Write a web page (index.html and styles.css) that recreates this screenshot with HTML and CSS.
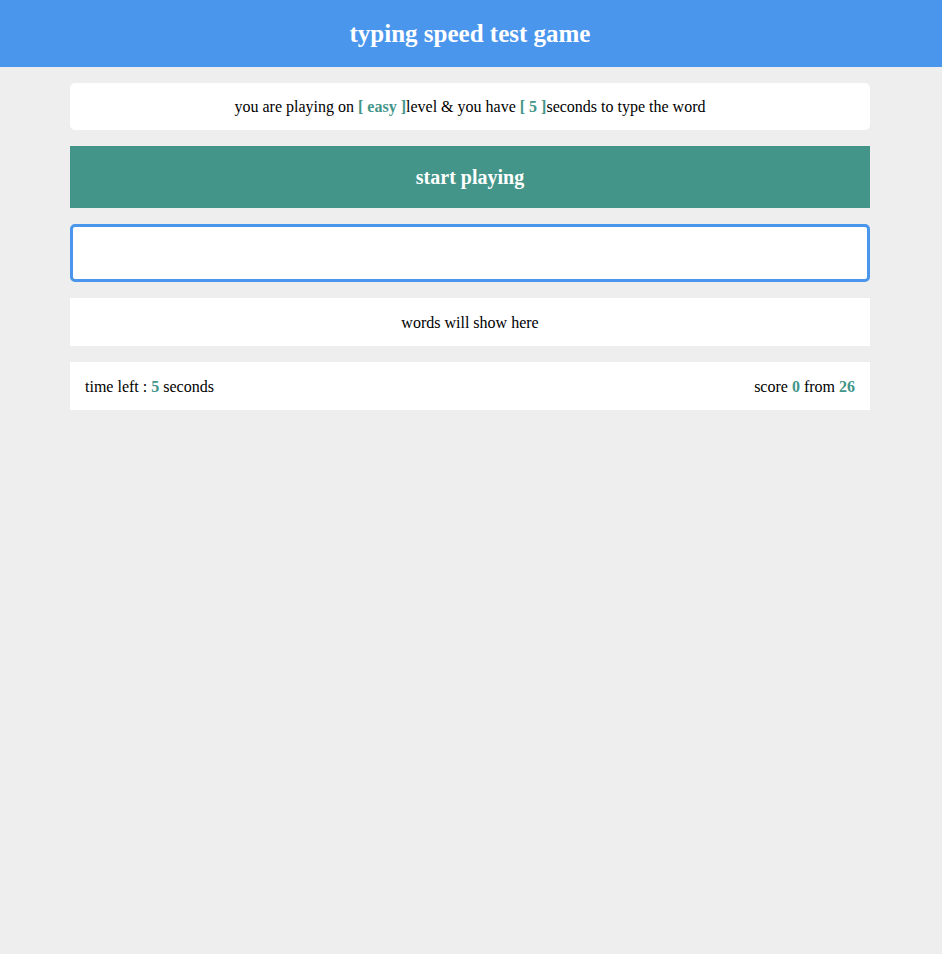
FILE: index.html
```html
<!DOCTYPE html>
<html>
<head>
<meta charset="utf-8">
<link rel="stylesheet" href="styles.css">
</head>
<body>
<header class="header">typing speed test game</header>
<main class="game">
  <div class="message">you are playing on <span class="hl">[ easy ]</span>level &amp; you have <span class="hl">[ 5 ]</span>seconds to type the word</div>
  <div class="start">start playing</div>
  <input class="input" type="text">
  <div class="words">words will show here</div>
  <div class="control">
    <div>time left : <span class="hl">5</span> seconds</div>
    <div>score <span class="hl">0</span> from <span class="hl">26</span></div>
  </div>
</main>
</body>
</html>
```
FILE: styles.css
```css
* { box-sizing: border-box; }
body {
  margin: 0;
  background: #eeeeee;
  font-family: "Liberation Serif", "Times New Roman", serif;
  font-size: 16px;
  color: #000;
  min-height: 954px;
}
.header {
  background: #4a96ed;
  color: #fff;
  font-weight: bold;
  font-size: 25px;
  text-align: center;
  height: 67px;
  line-height: 67px;
  padding-right: 2px;
}
.game {
  width: 800px;
  margin: 16px calc(50% - 401px) 0 calc(50% - 401px);
  display: flex;
  flex-direction: column;
  gap: 16px;
}
.message {
  background: #fff;
  border-radius: 5px;
  text-align: center;
  padding: 15px 15px 14px;
  height: 47px;
}
.hl {
  color: #43958a;
  font-weight: bold;
}
.start {
  background: #43958a;
  color: #fff;
  font-weight: bold;
  font-size: 20px;
  text-align: center;
  height: 62px;
  line-height: 62px;
}
.input {
  display: block;
  width: 100%;
  height: 58px;
  border: 3px solid #4a96ed;
  border-radius: 5px;
  background: #fff;
  outline: none;
  font-family: inherit;
  font-size: 16px;
}
.words {
  background: #fff;
  text-align: center;
  height: 48px;
  padding: 16px 15px 14px;
}
.control {
  background: #fff;
  display: flex;
  justify-content: space-between;
  height: 48px;
  padding: 16px 15px 14px;
}
```
